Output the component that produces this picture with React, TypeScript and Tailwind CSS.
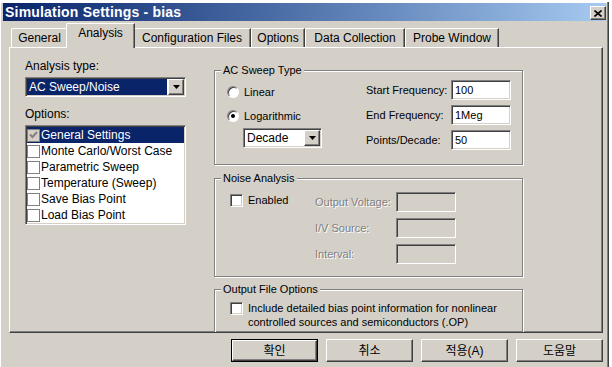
import React from "react";

const FONT = "font-['Liberation_Sans','Noto_Sans_CJK_KR',sans-serif]";
const RAISED =
  "border border-t-white border-l-white border-r-[#404040] border-b-[#404040] shadow-[inset_-1px_-1px_0_#808080]";
const SUNKEN =
  "border border-t-[#808080] border-l-[#808080] border-r-white border-b-white shadow-[inset_1px_1px_0_#404040,inset_-1px_-1px_0_#d4d0c8]";

const TABS = [
  { label: "General", w: "w-[57px]" },
  { label: "Analysis", w: "w-[63px]", active: true },
  { label: "Configuration Files", w: "w-[118px]" },
  { label: "Options", w: "w-[54px]" },
  { label: "Data Collection", w: "w-[100px]" },
  { label: "Probe Window", w: "w-[94px]" },
];

const OPTIONS = [
  "General Settings",
  "Monte Carlo/Worst Case",
  "Parametric Sweep",
  "Temperature (Sweep)",
  "Save Bias Point",
  "Load Bias Point",
];

function DropButton() {
  return (
    <div className={`w-[16px] h-[16px] shrink-0 bg-[#d4d0c8] flex items-center justify-center ${RAISED}`}>
      <svg width="7" height="4" viewBox="0 0 7 4">
        <path d="M0 0h7L3.5 4z" fill="#000" />
      </svg>
    </div>
  );
}

function Group({ title, className, children }: { title: string; className: string; children?: React.ReactNode }) {
  return (
    <div className={`relative shrink-0 border border-[#808080] shadow-[1px_1px_0_#fff,inset_1px_1px_0_#fff] ${className}`}>
      <span className="absolute -top-[8px] left-[6px] bg-[#d4d0c8] px-[2px] text-[11px] leading-[14px]">{title}</span>
      {children}
    </div>
  );
}

function CheckBox() {
  return <div className={`w-[13px] h-[13px] shrink-0 bg-white ${SUNKEN}`} />;
}

function Radio({ checked }: { checked?: boolean }) {
  return (
    <div className="w-[12px] h-[12px] shrink-0 rounded-full border border-t-[#808080] border-l-[#808080] border-r-white border-b-white bg-white shadow-[inset_1px_1px_0_#404040] flex items-center justify-center">
      {checked && <div className="w-[4px] h-[4px] rounded-full bg-black" />}
    </div>
  );
}

function TextBox({ value, disabled }: { value?: string; disabled?: boolean }) {
  return (
    <div className={`h-[20px] w-[60px] flex items-center pl-[3px] text-[11px] ${disabled ? "bg-[#d4d0c8]" : "bg-white"} ${SUNKEN}`}>
      {value}
    </div>
  );
}

function Button({ label, isDefault }: { label: string; isDefault?: boolean }) {
  return (
    <div className={`w-[87px] h-[23px] ${isDefault ? "border border-black" : ""}`}>
      <div className={`h-full w-full flex items-center justify-center text-[12px] ${RAISED}`}>{label}</div>
    </div>
  );
}

export default function App() {
  return (
    <div className={`w-[612px] h-[367px] overflow-hidden bg-white pt-[2px] text-black ${FONT}`}>
      <div className="w-[609px] h-[365px] bg-[#d4d0c8] border-r border-r-[#404040] shadow-[inset_-1px_0_0_#808080,inset_1px_1px_0_#fff] pl-[3px] pr-[2px] pt-[1px] flex flex-col">
        {/* title bar */}
        <div className="h-[18px] shrink-0 bg-linear-to-r from-[#0a246a] to-[#a6caf0] flex items-end justify-between pl-[2px] pb-[1px]">
          <span className="self-center text-white font-bold text-[14px] leading-[16px] tracking-[0.2px]">Simulation Settings - bias</span>
          <div className={`w-[16px] h-[14px] bg-[#d4d0c8] flex items-center justify-center ${RAISED}`}>
            <svg width="8" height="7" viewBox="0 0 8 7">
              <path d="M0.5 0.5l7 6M7.5 0.5l-7 6" stroke="#000" strokeWidth="1.6" />
            </svg>
          </div>
        </div>

        {/* tabs */}
        <div className="mt-[5px] h-[21px] shrink-0 ml-[8px] flex items-end">
          {TABS.map((t) =>
            t.active ? (
              <div
                key={t.label}
                className={`${t.w} relative z-10 -mx-[2px] -mb-[1px] box-content px-[2px] h-[22px] bg-[#d4d0c8] border-t border-l border-t-white border-l-white border-r border-r-[#404040] shadow-[inset_-1px_0_0_#808080] rounded-tl-[2px] flex items-start justify-center pt-[2px] text-[12px] leading-[14px]`}
              >
                {t.label}
              </div>
            ) : (
              <div
                key={t.label}
                className={`${t.w} h-[19px] bg-[#d4d0c8] border-t border-l border-t-white border-l-white border-r border-r-[#404040] shadow-[inset_-1px_0_0_#808080] rounded-tl-[2px] flex items-center justify-center text-[12px] leading-[14px]`}
              >
                {t.label}
              </div>
            )
          )}
        </div>

        {/* tab panel */}
        <div className="ml-[6px] w-[594px] h-[286px] shrink-0 overflow-hidden border border-t-white border-l-white border-r-[#404040] border-b-[#404040] shadow-[inset_-1px_-1px_0_#808080] flex">
          {/* left column */}
          <div className="ml-[15px] w-[161px] pt-[11px] flex flex-col">
            <div className="text-[12px] leading-[14px] h-[14px]">Analysis type:</div>
            <div className={`mt-[4px] h-[20px] bg-white p-[1px] flex items-center ${SUNKEN}`}>
              <div className="flex-1 h-[16px] mr-[1px] bg-[#0a246a] text-white text-[12px] leading-[16px] pl-[2px]">
                AC Sweep/Noise
              </div>
              <DropButton />
            </div>
            <div className="mt-[10px] text-[12px] leading-[14px] h-[14px]">Options:</div>
            <div className={`mt-[4px] h-[100px] shrink-0 bg-white p-[1px] ${SUNKEN}`}>
              {OPTIONS.map((o, i) => (
                <div
                  key={o}
                  className={`h-[16px] flex items-center text-[12px] leading-[14px] ${i === 0 ? "bg-[#0a246a] text-white" : ""}`}
                >
                  <div
                    className={`w-[13px] h-[13px] mr-[1px] border border-[#808080] flex items-center justify-center ${i === 0 ? "bg-[#d4d0c8]" : "bg-white"}`}
                  >
                    {i === 0 && (
                      <svg width="9" height="8" viewBox="0 0 9 8">
                        <path d="M1 3.5l2.5 2.5 4.5-5" stroke="#808080" strokeWidth="2" fill="none" />
                      </svg>
                    )}
                  </div>
                  {o}
                </div>
              ))}
            </div>
          </div>

          {/* right column */}
          <div className="ml-[28px] w-[309px] pt-[22px] flex flex-col">
            <Group title="AC Sweep Type" className="h-[95px] flex items-start">
              <div className="w-[151px] pl-[12px] pt-[9px] flex flex-col text-[11px]">
                <div className="h-[24px] flex items-center gap-[5px]">
                  <Radio />
                  Linear
                </div>
                <div className="h-[24px] flex items-center gap-[5px]">
                  <Radio checked />
                  Logarithmic
                </div>
                <div className={`ml-[16px] w-[79px] h-[20px] bg-white p-[1px] flex items-center ${SUNKEN}`}>
                  <div className="flex-1 pl-[2px] text-[12px]">Decade</div>
                  <DropButton />
                </div>
              </div>
              <div className="pt-[9px] grid grid-cols-[85px_60px] content-start gap-y-[5px] items-center text-[11px]">
                <span>Start Frequency:</span>
                <TextBox value="100" />
                <span>End Frequency:</span>
                <TextBox value="1Meg" />
                <span>Points/Decade:</span>
                <TextBox value="50" />
              </div>
            </Group>

            <Group title="Noise Analysis" className="mt-[13px] h-[99px] flex items-start">
              <div className="w-[100px] pl-[15px] pt-[11px]">
                <div className="h-[20px] flex items-center gap-[5px] text-[11px]">
                  <CheckBox />
                  Enabled
                </div>
              </div>
              <div className="pt-[13px] grid grid-cols-[81px_60px] content-start gap-y-[6px] items-center text-[11px] text-[#808080] [text-shadow:1px_1px_0_#fff]">
                <span>Output Voltage:</span>
                <TextBox disabled />
                <span>I/V Source:</span>
                <TextBox disabled />
                <span>Interval:</span>
                <TextBox disabled />
              </div>
            </Group>

            <Group title="Output File Options" className="mt-[12px] h-[60px] flex">
              <div className="pl-[15px] pt-[11px] flex items-start gap-[5px] text-[11px] leading-[14px]">
                <div className="mt-[1px]">
                  <CheckBox />
                </div>
                <div>
                  Include detailed bias point information for nonlinear
                  <br />
                  controlled sources and semiconductors (.OP)
                </div>
              </div>
            </Group>
          </div>
        </div>

        {/* buttons */}
        <div className="mt-[6px] mr-[3px] flex justify-end gap-[8px]">
          <Button label="확인" isDefault />
          <Button label="취소" />
          <Button label="적용(A)" />
          <Button label="도움말" />
        </div>
      </div>
    </div>
  );
}
